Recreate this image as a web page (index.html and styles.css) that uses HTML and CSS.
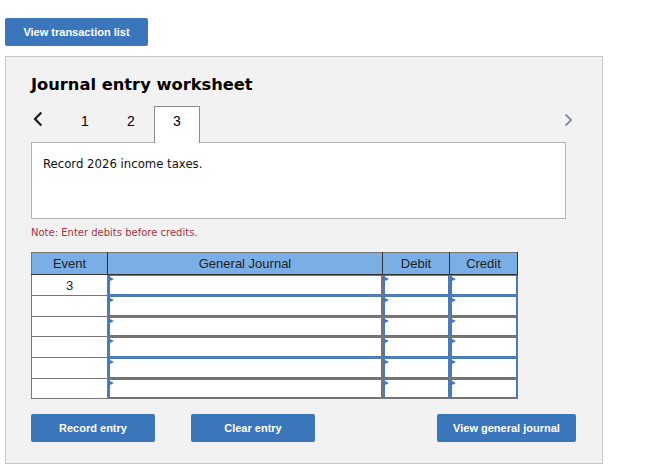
FILE: index.html
```html
<!DOCTYPE html>
<html lang="en">
<head>
<meta charset="utf-8">
<title>Journal entry worksheet</title>
<link rel="stylesheet" href="styles.css">
</head>
<body>
<button class="btn btn-top" type="button">View transaction list</button>
<div class="panel">
  <h1 class="title">Journal entry worksheet</h1>
  <div class="tabs">
    <span class="nav nav-prev"><svg width="10" height="16" viewBox="0 0 10 16"><path d="M8.3 1.5 L2 8 L8.3 14.5" fill="none" stroke="#1a1a1a" stroke-width="2.2"/></svg></span>
    <span class="tab">1</span>
    <span class="tab">2</span>
    <span class="tab tab-active">3</span>
    <span class="nav nav-next"><svg width="9" height="14" viewBox="0 0 9 14"><path d="M1.5 1.5 L7.2 7 L1.5 12.5" fill="none" stroke="#7d8ca3" stroke-width="1.8"/></svg></span>
  </div>
  <div class="prompt">Record 2026 income taxes.</div>
  <p class="note">Note: Enter debits before credits.</p>
  <table class="journal">
    <colgroup>
      <col class="c-event"><col class="c-gj"><col class="c-debit"><col class="c-credit">
    </colgroup>
    <thead>
      <tr><th>Event</th><th>General Journal</th><th>Debit</th><th>Credit</th></tr>
    </thead>
    <tbody>
      <tr><td class="event">3</td><td><div class="field"></div></td><td><div class="field"></div></td><td><div class="field"></div></td></tr>
      <tr><td class="event"></td><td><div class="field"></div></td><td><div class="field"></div></td><td><div class="field"></div></td></tr>
      <tr class="short"><td class="event"></td><td><div class="field"></div></td><td><div class="field"></div></td><td><div class="field"></div></td></tr>
      <tr><td class="event"></td><td><div class="field"></div></td><td><div class="field"></div></td><td><div class="field"></div></td></tr>
      <tr><td class="event"></td><td><div class="field"></div></td><td><div class="field"></div></td><td><div class="field"></div></td></tr>
      <tr class="short"><td class="event"></td><td><div class="field"></div></td><td><div class="field"></div></td><td><div class="field"></div></td></tr>
    </tbody>
  </table>
  <div class="actions">
    <button class="btn btn-action" type="button">Record entry</button>
    <button class="btn btn-action btn-clear" type="button">Clear entry</button>
    <button class="btn btn-journal" type="button">View general journal</button>
  </div>
</div>
</body>
</html>
```
FILE: styles.css
```css
body {
  margin: 0;
  padding: 18px 0 0 5px;
  background: #fff;
  font-family: "Liberation Sans", Arial, sans-serif;
}

.btn {
  display: block;
  height: 28px;
  padding: 0;
  border: 0;
  border-radius: 2px;
  background: #3a76b9;
  color: #fff;
  font: bold 11px "Liberation Sans", Arial, sans-serif;
  cursor: pointer;
}

.btn-top {
  width: 143px;
}

.panel {
  margin-top: 10px;
  width: 598px;
  box-sizing: border-box;
  border: 1px solid #c8c8c8;
  background: #f2f2f2;
  padding: 18px 0 21px 25px;
}

.title {
  margin: 0;
  font: bold 16.3px/20px "DejaVu Sans", Verdana, sans-serif;
  color: #000;
}

.tabs {
  display: flex;
  align-items: flex-start;
  width: 542px;
  height: 36px;
  margin-top: 11px;
}

.nav-prev {
  width: 31px;
  box-sizing: border-box;
  padding-left: 2px;
  margin-top: 5px;
  line-height: 0;
}

.nav-next {
  margin-left: auto;
  margin-top: 7px;
  line-height: 0;
}

.tab {
  width: 46px;
  height: 37px;
  box-sizing: border-box;
  padding-top: 1px;
  text-align: center;
  font: 14px/28px "Liberation Sans", Arial, sans-serif;
  color: #000;
}

.tab-active {
  position: relative;
  z-index: 1;
  padding-top: 0;
  background: #fff;
  border: 1px solid #8c8c8c;
  border-bottom: 0;
}

.prompt {
  width: 535px;
  height: 77px;
  box-sizing: border-box;
  border: 1px solid #b4b4b4;
  background: #fff;
  padding: 14px 11px 0;
  font: 11.7px/15px "DejaVu Sans", Verdana, sans-serif;
  color: #111;
}

.note {
  margin: 8px 0 0;
  font: 10px/12px "DejaVu Sans", Verdana, sans-serif;
  color: #a3324a;
}

.journal {
  margin-top: 13px;
  width: 486px;
  table-layout: fixed;
  border-collapse: collapse;
  background: #fff;
  border: 1px solid #777;
}

.c-event { width: 76px; }
.c-gj { width: 275px; }
.c-debit { width: 67px; }
.c-credit { width: 68px; }

.journal th {
  height: 21px;
  padding: 0;
  background: #7aaee4;
  border: 1px solid #333;
  border-top-color: #777;
  font: normal 13px "Liberation Sans", Arial, sans-serif;
  color: #222;
  text-align: center;
}

.journal th:first-child {
  border-left-color: #777;
}

.journal td {
  height: 20px;
  padding: 0;
  border: 1px solid #777;
}

.journal tr.short td {
  height: 19px;
}

.journal td.event {
  text-align: center;
  font: 13px "Liberation Sans", Arial, sans-serif;
  color: #222;
}

.field {
  position: relative;
  height: 20px;
  box-sizing: border-box;
  border: 1px solid #4a7ab6;
  border-left-width: 2px;
  background: #fff;
}

.journal tr.short .field {
  height: 19px;
}

.field::before {
  content: "";
  position: absolute;
  left: 0;
  top: 1px;
  border-left: 4px solid #3f78c0;
  border-top: 2.5px solid transparent;
  border-bottom: 2.5px solid transparent;
}

.actions {
  display: flex;
  width: 545px;
  margin-top: 15px;
}

.btn-action {
  width: 124px;
}

.btn-clear {
  margin-left: 36px;
}

.btn-journal {
  width: 139px;
  margin-left: auto;
}
```
